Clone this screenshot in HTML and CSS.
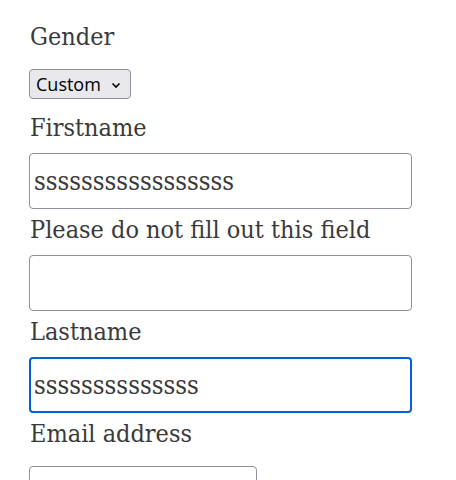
FILE: index.html
```html
<!DOCTYPE html>
<html>
<head>
<meta charset="utf-8">
<link rel="stylesheet" href="styles.css">
</head>
<body>
<form class="form">
  <div class="field field-select">
    <label class="label" for="gender">Gender</label>
    <select class="select" id="gender"><option>Custom</option></select>
  </div>
  <div class="field">
    <label class="label" for="first">Firstname</label>
    <input class="input" id="first" type="text" value="sssssssssssssssss">
  </div>
  <div class="field">
    <label class="label" for="hp">Please do not fill out this field</label>
    <input class="input" id="hp" type="text" value="">
  </div>
  <div class="field">
    <label class="label" for="last">Lastname</label>
    <input class="input input-focus" id="last" type="text" value="ssssssssssssss">
  </div>
  <div class="field field-email">
    <label class="label" for="email">Email address</label>
    <input class="input input-small" id="email" type="email" value="">
  </div>
</form>
</body>
</html>
```

FILE: styles.css
```css
html, body {
  margin: 0;
  padding: 0;
  background: #ffffff;
}
body {
  font-family: "DejaVu Serif Condensed", "DejaVu Serif", serif;
  color: #3a3a3a;
  overflow: hidden;
  height: 480px;
}
.form {
  padding: 20px 0 0 29px;
  display: flex;
  flex-direction: column;
}
.field {
  display: flex;
  flex-direction: column;
  align-items: flex-start;
}
.label {
  font-size: 25px;
  line-height: 33px;
  padding-left: 1px;
  margin-bottom: 9px;
}
.field-select .label {
  margin-bottom: 16px;
}
.select {
  -webkit-appearance: none;
  appearance: none;
  box-sizing: border-box;
  font-family: "Open Sans", "Noto Sans", sans-serif;
  font-size: 18px;
  line-height: 28px;
  color: #000;
  height: 30px;
  width: 102px;
  padding: 0 0 0 6px;
  border: 1px solid #8f8f9d;
  border-radius: 4px;
  background-color: #e9e9ed;
  background-image: url("data:image/svg+xml,%3Csvg xmlns='http://www.w3.org/2000/svg' width='10' height='7' viewBox='0 0 10 7'%3E%3Cpath d='M1.5 1.5 L5 5 L8.5 1.5' fill='none' stroke='%23000' stroke-width='1.6'/%3E%3C/svg%3E");
  background-repeat: no-repeat;
  background-position: 81px 12px;
  background-size: 10px 7px;
  margin-bottom: 12px;
}
.input {
  box-sizing: border-box;
  width: 383px;
  height: 56px;
  border: 1px solid #8f8f9d;
  border-radius: 4px;
  padding: 0 4px;
  font-family: "DejaVu Serif Condensed", "DejaVu Serif", serif;
  font-size: 25.5px;
  color: #3a3a3a;
  background: #fff;
  margin-bottom: 4px;
  outline: none;
}
.input-focus {
  border: 2px solid #0060df;
  padding: 0 3px;
}
.field-email .label {
  margin-bottom: 16px;
}
.input-small {
  width: 228px;
}
```
